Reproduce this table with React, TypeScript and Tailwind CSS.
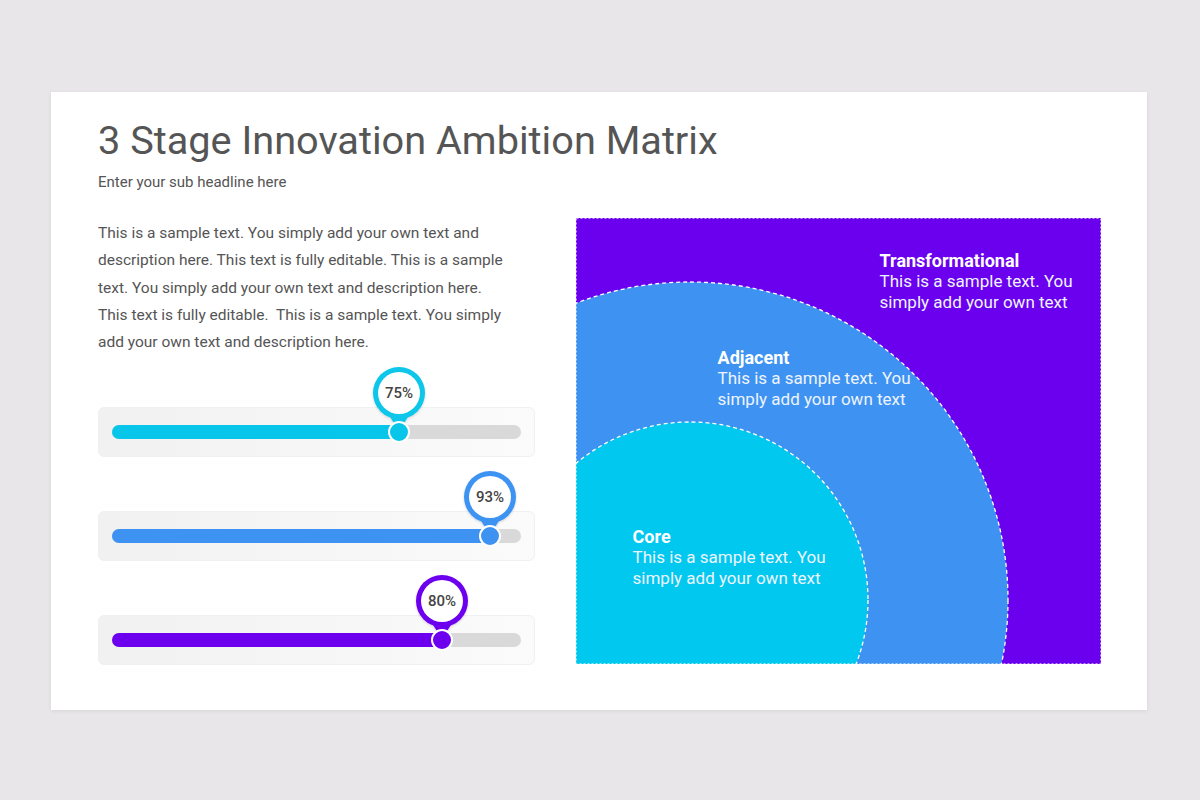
import React from 'react';

interface Slider {
  value: string;
  color: string;
  knob: number; // knob centre from panel left, px
}

const sliders: Slider[] = [
  { value: '75%', color: '#08c6ea', knob: 301 },
  { value: '93%', color: '#3e93f2', knob: 392 },
  { value: '80%', color: '#6c00ee', knob: 344 },
];

const zones = [
  { title: 'Transformational', x: 304, y: 32 },
  { title: 'Adjacent', x: 142, y: 129 },
  { title: 'Core', x: 57, y: 308 },
];

function Pin({ color, value }: { color: string; value: string }) {
  return (
    <div className="relative w-[56px] h-[80px]">
      <svg width="56" height="80" viewBox="0 0 56 80" className="absolute inset-0">
        <defs>
          <filter id={`sh-${value}`} x="-30%" y="-30%" width="160%" height="160%">
            <feDropShadow dx="0" dy="1" stdDeviation="1.2" floodColor="#000" floodOpacity="0.18" />
          </filter>
        </defs>
        <g filter={`url(#sh-${value})`}>
          <path d="M14 44 L28 66 L42 44 Z" fill={color} />
          <circle cx="28" cy="28" r="26" fill={color} />
          <circle cx="28" cy="28" r="21" fill="#fff" />
        </g>
        <circle cx="28" cy="67" r="10" fill={color} stroke="#fff" strokeWidth="2" />
      </svg>
      <div className="absolute left-0 top-0 w-[56px] h-[56px] flex items-center justify-center text-[15px] font-medium text-[#444]">
        {value}
      </div>
    </div>
  );
}

function SliderRow({ s }: { s: Slider }) {
  return (
    <div className="relative h-[50px] rounded-[6px] bg-gradient-to-r from-[#f1f1f1] to-[#fbfbfb] border border-[#f0f0f0] flex items-center px-[13px]">
      <div className="relative w-full h-[14px] rounded-full bg-[#d9d9d9]">
        <div className="h-full rounded-full" style={{ width: s.knob - 14, background: s.color }} />
      </div>
      <div className="absolute top-[-43px]" style={{ left: s.knob - 29 }}>
        <Pin color={s.color} value={s.value} />
      </div>
    </div>
  );
}

function Matrix() {
  return (
    <div className="relative w-[525px] h-[446px]">
      <svg width="525" height="446" viewBox="0 0 525 446" className="absolute inset-0">
        <defs>
          <clipPath id="box">
            <rect x="0" y="0" width="525" height="446" />
          </clipPath>
        </defs>
        <rect x="0" y="0" width="525" height="446" fill="#6b00ef" />
        <g clipPath="url(#box)">
          <circle cx="114" cy="382" r="318" fill="#3e93f2" stroke="#fff" strokeWidth="1.3" strokeDasharray="4 3" />
          <circle cx="114" cy="382" r="178" fill="#00c8ee" stroke="#fff" strokeWidth="1.3" strokeDasharray="4 3" />
        </g>
        <rect x="0.5" y="0.5" width="524" height="445" fill="none" stroke="#ffffff" strokeOpacity="0.6" strokeWidth="1" strokeDasharray="2 2" />
      </svg>
      {zones.map((z) => (
        <div key={z.title} className="absolute text-white" style={{ left: z.x, top: z.y }}>
          <div className="text-[18px] font-bold leading-[21px]">{z.title}</div>
          <div className="text-[17px] leading-[20.5px] text-[#eef4ff]">
            This is a sample text. You
            <br />
            simply add your own text
          </div>
        </div>
      ))}
    </div>
  );
}

export default function App() {
  return (
    <div className="min-h-screen bg-[#e8e6e8] pt-[92px] pl-[51px] font-['Roboto','Liberation_Sans',sans-serif]">
      <div className="bg-white w-[1096px] h-[618px] px-[47px] pt-[25px] shadow-[0_1px_4px_rgba(0,0,0,0.08)]">
        <h1 className="text-[39.7px] leading-[48px] text-[#555555]">3 Stage Innovation Ambition Matrix</h1>
        <p className="mt-[7px] text-[15px] leading-[20px] text-[#555555]">Enter your sub headline here</p>

        <div className="mt-[26px] flex gap-[41px]">
          <div className="w-[437px] flex flex-col">
            <p className="mt-[2px] w-[412px] text-[15.5px] leading-[27.3px] text-[#555555]">
              This is a sample text. You simply add your own text and description here. This text is fully editable. This is a sample text. You simply add your own text and description here. This text is fully editable.&nbsp; This is a sample text. You simply add your own text and description here.
            </p>
            <div className="mt-[51px] flex flex-col gap-[54px]">
              {sliders.map((s) => (
                <SliderRow key={s.value} s={s} />
              ))}
            </div>
          </div>
          <Matrix />
        </div>
      </div>
    </div>
  );
}
